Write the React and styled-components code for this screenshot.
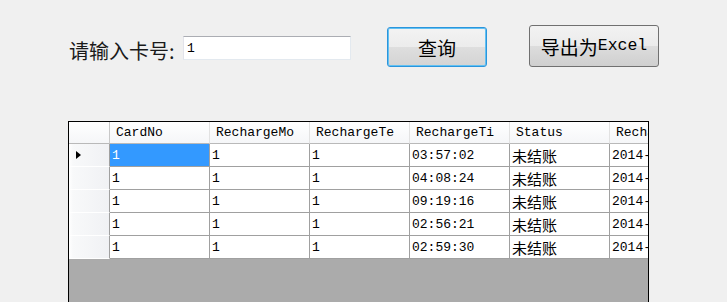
import React from "react";
import styled, { createGlobalStyle, css } from "styled-components";

const GlobalStyle = createGlobalStyle`
  html, body {
    margin: 0;
    padding: 0;
    background: #f0f0f0;
    overflow: hidden;
  }
  * { box-sizing: border-box; }
`;

const Page = styled.div`
  width: 727px;
  height: 302px;
  overflow: hidden;
  background: #f0f0f0;
  font-family: "Noto Sans CJK SC", sans-serif;
`;

const Toolbar = styled.div`
  display: flex;
  align-items: flex-start;
  height: 121px;
  padding-left: 69px;
`;

const Label = styled.label`
  width: 114px;
  margin-top: 37px;
  font-family: "Noto Sans CJK SC", sans-serif;
  font-size: 20px;
  line-height: 28px;
  color: #1a1a1a;
  white-space: nowrap;
`;

const CardInput = styled.input`
  width: 168px;
  height: 24px;
  margin: 36px 0 0 0;
  padding: 0 3px;
  border: 1px solid;
  border-color: #abadb3 #e3e9ef #e3e9ef #e2e3ea;
  background: #fff;
  font-family: "Liberation Mono", monospace;
  font-size: 13px;
  color: #000;
  outline: none;
`;

const Button = styled.button`
  width: ${(p) => p.$w}px;
  height: ${(p) => p.$h}px;
  margin: ${(p) => p.$top}px 0 0 ${(p) => p.$left}px;
  padding: 0;
  border: 1px solid #707070;
  border-radius: 3px;
  background: linear-gradient(#f2f2f2 0%, #ebebeb 50%, #dddddd 50%, #cfcfcf 100%);
  color: #000;
  font-family: "Noto Sans CJK SC", sans-serif;
  font-size: 19px;
  line-height: 1;
  display: flex;
  align-items: center;
  justify-content: center;
  white-space: nowrap;
  cursor: default;
  ${(p) =>
    p.$focused &&
    css`
      border-color: #2b95dc;
      box-shadow: inset 0 0 0 1px #62c1f2;
      background: linear-gradient(#f3f3f3 0%, #ececec 50%, #dedede 50%, #d4d4d4 100%);
    `}
`;

const Latin = styled.span`
  font-family: "Liberation Mono", monospace;
  font-size: 16.5px;
`;

const Grid = styled.div`
  margin-left: 68px;
  width: 581px;
  height: 181px;
  border: 1px solid #000;
  border-bottom: none;
  background: #ababab;
  overflow: hidden;
`;

const Table = styled.div`
  display: grid;
  grid-template-columns: 41px repeat(6, 100px);
  grid-auto-rows: 23px;
  grid-template-rows: 22px;
  width: max-content;
`;

const HeaderCell = styled.div`
  display: flex;
  align-items: center;
  padding-left: 6px;
  background: linear-gradient(#ffffff, #f5f6f8);
  border-right: 1px solid ${(p) => (p.$corner ? "#c8c8c8" : "#e2e2e2")};
  border-bottom: 1px solid #b9b9b9;
  font-family: "Liberation Mono", monospace;
  font-size: 13px;
  color: #000;
  white-space: nowrap;
  overflow: hidden;
`;

const RowHeader = styled.div`
  display: flex;
  align-items: center;
  padding-left: 7px;
  background: linear-gradient(to right, #ffffff 0px, #f8f9fa 4px, #f0f1f4 100%);
  border-right: 1px solid #a0a0a0;
  border-bottom: 1px solid #ffffff;
`;

const Pointer = styled.span`
  width: 0;
  height: 0;
  border-left: 5px solid #000;
  border-top: 4px solid transparent;
  border-bottom: 4px solid transparent;
`;

const Cell = styled.div`
  display: flex;
  align-items: center;
  padding-left: 2px;
  background: ${(p) => (p.$selected ? "#3399ff" : "#ffffff")};
  color: ${(p) => (p.$selected ? "#ffffff" : "#000000")};
  border-right: 1px solid #a0a0a0;
  border-bottom: 1px solid #a0a0a0;
  font-family: "Liberation Mono", monospace;
  font-size: 13px;
  white-space: nowrap;
  overflow: hidden;
`;

const CjkText = styled.span`
  font-family: "Noto Sans CJK SC", sans-serif;
  font-size: 15px;
  line-height: 1;
`;

const columns = ["CardNo", "RechargeMo", "RechargeTe", "RechargeTi", "Status", "RechargeDate"];

const rows = [
  ["1", "1", "1", "03:57:02", "未结账", "2014-06-13"],
  ["1", "1", "1", "04:08:24", "未结账", "2014-06-13"],
  ["1", "1", "1", "09:19:16", "未结账", "2014-06-14"],
  ["1", "1", "1", "02:56:21", "未结账", "2014-06-15"],
  ["1", "1", "1", "02:59:30", "未结账", "2014-06-15"],
];

export default function App() {
  return (
    <Page>
      <GlobalStyle />
      <Toolbar>
        <Label>请输入卡号:</Label>
        <CardInput defaultValue="1" />
        <Button $w={100} $h={40} $top={27} $left={36} $focused>
          查询
        </Button>
        <Button $w={130} $h={42} $top={25} $left={42}>
          导出为<Latin>Excel</Latin>
        </Button>
      </Toolbar>
      <Grid>
        <Table>
          <HeaderCell $corner />
          {columns.map((c) => (
            <HeaderCell key={c}>{c}</HeaderCell>
          ))}
          {rows.map((r, i) => (
            <React.Fragment key={i}>
              <RowHeader>{i === 0 && <Pointer />}</RowHeader>
              {r.map((v, j) => (
                <Cell key={j} $selected={i === 0 && j === 0}>
                  {j === 4 ? <CjkText>{v}</CjkText> : v}
                </Cell>
              ))}
            </React.Fragment>
          ))}
        </Table>
      </Grid>
    </Page>
  );
}
